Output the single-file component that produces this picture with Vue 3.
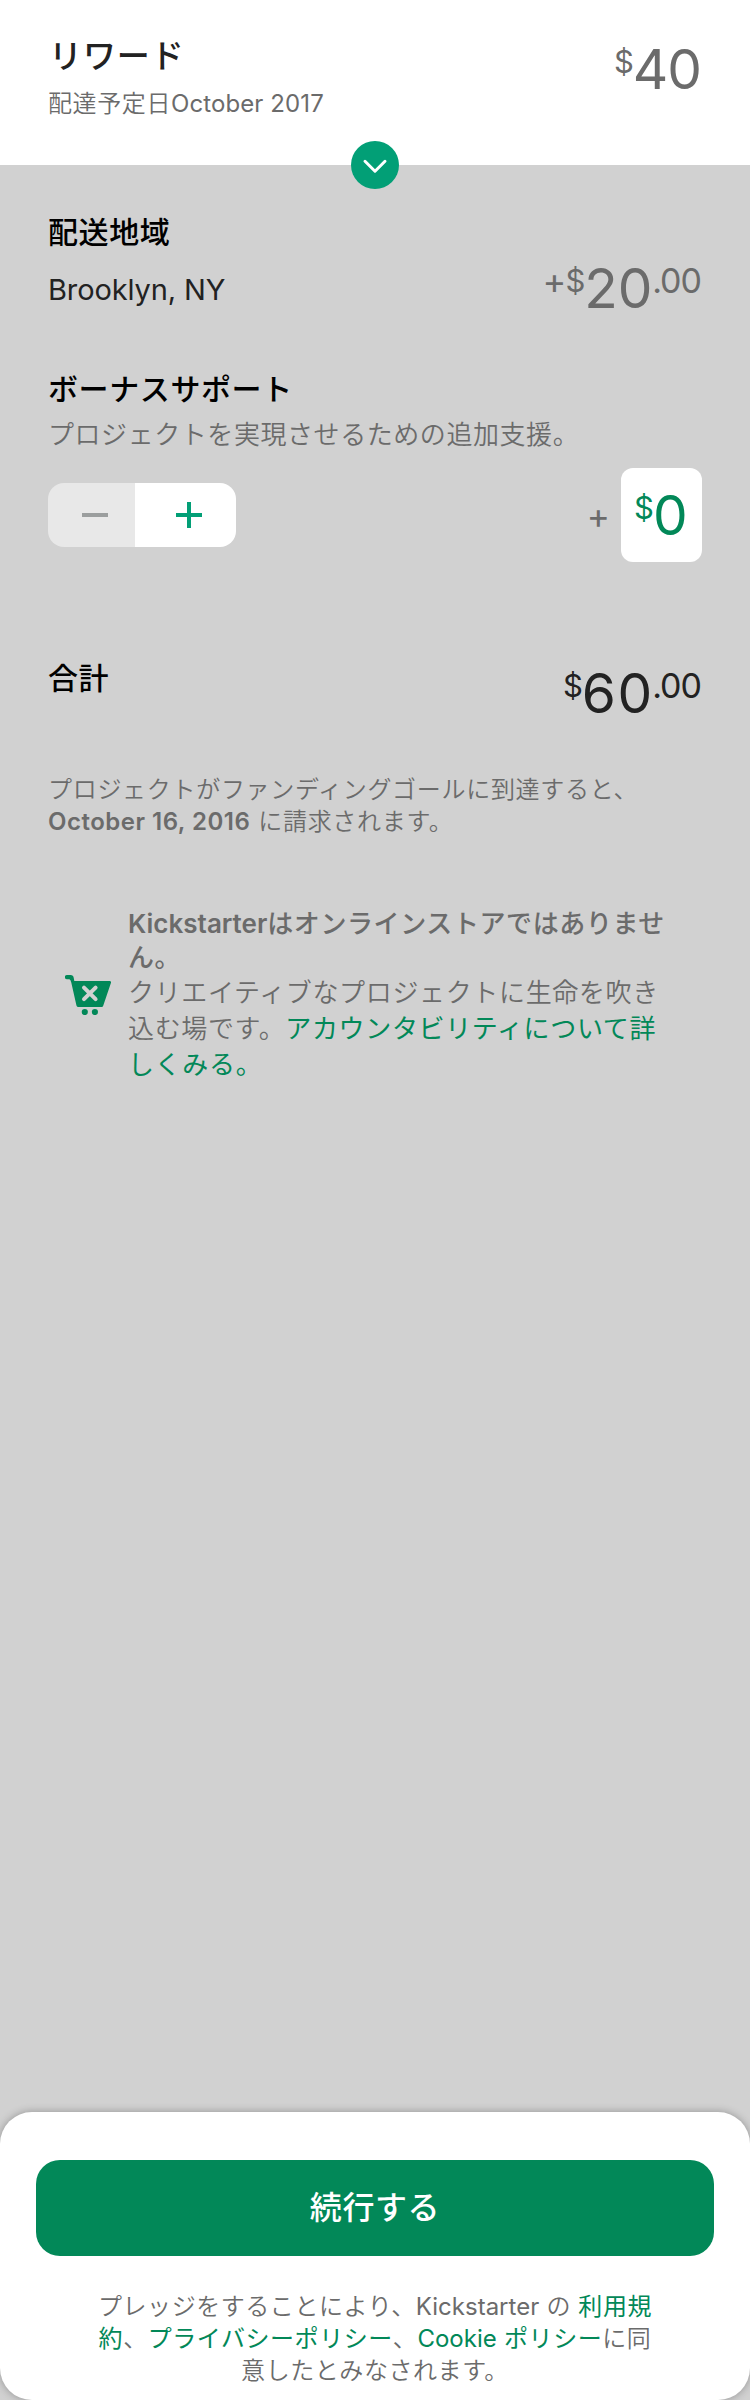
<script setup>
const notice = {
  strong: ['Kickstarter', 'はオンラインストアではありませ', 'ん。'],
  body: ['クリエイティブなプロジェクトに生命を吹き', '込む場です。'],
  link: ['アカウンタビリティについて詳', 'しくみる。'],
}
</script>

<template>
  <div class="screen">
    <header class="reward">
      <div class="reward-info">
        <h1>リワード</h1>
        <p>配達予定日<span class="date">October 2017</span></p>
      </div>
      <div class="price muted reward-price"><span class="small">$</span><span class="big">40</span></div>
      <button class="expand" aria-label="expand">
        <svg width="48" height="48" viewBox="0 0 48 48"><path d="M14 20.3 24 30.2 34 20.3" /></svg>
      </button>
    </header>

    <main>
      <section class="shipping">
        <h2>配送地域</h2>
        <div class="row">
          <span class="place">Brooklyn, NY</span>
          <div class="price muted"><span class="small sign">+</span><span class="small">$</span><span class="big">20</span><span class="small cents">.00</span></div>
        </div>
      </section>

      <section class="bonus">
        <h2>ボーナスサポート</h2>
        <p>プロジェクトを実現させるための追加支援。</p>
        <div class="row controls">
          <div class="stepper">
            <button class="minus" aria-label="minus"><svg width="26" height="26" viewBox="0 0 26 26"><path d="M0 13H26" /></svg></button>
            <button class="plus" aria-label="plus"><svg width="26" height="26" viewBox="0 0 26 26"><path d="M0 13H26M13 0V26" /></svg></button>
          </div>
          <div class="amount">
            <span class="add">+</span>
            <div class="box price"><span class="small">$</span><span class="big">0</span></div>
          </div>
        </div>
      </section>

      <section class="total row">
        <h2>合計</h2>
        <div class="price dark"><span class="small">$</span><span class="big">60</span><span class="small cents">.00</span></div>
      </section>

      <p class="charge">プロジェクトがファンディングゴールに到達すると、<br><b>October 16, 2016</b><span class="after">に請求されます。</span></p>

      <section class="notice">
        <svg class="cart" width="46" height="40" viewBox="0 0 46 40">
          <path class="fill" d="M2 0H5.5C7.5 0 8.4 1 8.7 2.8L9.3 6H44.5C45.7 6 46.3 6.9 45.9 8L38.3 30.4C38 31.4 37.3 32 36.3 32H13.6C12.4 32 11.6 31.3 11.4 30.2L6.5 8.5C6.1 6.3 5.3 4.2 4 4.2H2A2.1 2.1 0 0 1 2 0Z" />
          <circle class="fill" cx="19.8" cy="37" r="3.1" />
          <circle class="fill" cx="29.9" cy="37" r="3.1" />
          <path class="cross" d="M19 12.6 30.6 24.2M30.6 12.6 19 24.2" />
        </svg>
        <div class="notice-text">
          <strong><span class="brand">{{ notice.strong[0] }}</span>{{ notice.strong[1] }}<br>{{ notice.strong[2] }}</strong>
          <p>{{ notice.body[0] }}<br>{{ notice.body[1] }}<a>{{ notice.link[0] }}<br>{{ notice.link[1] }}</a></p>
        </div>
      </section>
    </main>

    <footer>
      <div class="sheet">
        <button class="continue">続行する</button>
        <p>
          <span class="line">プレッジをすることにより、<span class="latin">Kickstarter</span> の <a>利用規</a></span>
          <span class="line"><a>約</a>、<a>プライバシーポリシー</a>、<a><span class="latin">Cookie</span> ポリシー</a>に同</span>
          <span class="line">意したとみなされます。</span>
        </p>
      </div>
    </footer>
  </div>
</template>

<style>
body {
  margin: 0;
  background: #d1d1d1;
}
</style>

<style scoped>
.screen {
  width: 750px;
  height: 2400px;
  display: flex;
  flex-direction: column;
  overflow: hidden;
  background: #d1d1d1;
  color: #6b6b6b;
  font-family: Inter, "Noto Sans CJK JP", sans-serif;
  font-weight: 350;
}
h1, h2, p { margin: 0; }
button { border: 0; padding: 0; font-family: inherit; }
a { color: #028858; }
svg { display: block; }

.reward {
  position: relative;
  box-sizing: border-box;
  height: 165px;
  padding: 36px 48px 0;
  display: flex;
  justify-content: space-between;
  background: #fff;
}
h1 {
  padding-left: 1px;
  font-size: 33px;
  line-height: 40px;
  font-weight: 500;
  letter-spacing: 0.9px;
  color: #222;
}
.reward-info p {
  margin-top: 12px;
  font-size: 24px;
  line-height: 32px;
  letter-spacing: 0.6px;
}
.date { font-weight: 400; letter-spacing: 0.1px; }
.expand {
  position: absolute;
  left: 351px;
  bottom: -24px;
  width: 48px;
  height: 48px;
  border-radius: 50%;
  background: #029f76;
}
.expand path {
  fill: none;
  stroke: #fff;
  stroke-width: 3;
  stroke-linecap: round;
  stroke-linejoin: round;
}

.row { display: flex; justify-content: space-between; }
.price {
  display: flex;
  align-items: flex-start;
  font-weight: 400;
}
.reward-price { padding: 5px 1px 0 0; }
.big { font-size: 55px; line-height: 56px; letter-spacing: -1px; }
.small { font-size: 31px; line-height: 42px; letter-spacing: -1px; }
.sign { font-size: 36px; }
.cents { margin-right: 1px; font-size: 34px; }
.muted { color: #6b6b6b; }
.dark { color: #222; }

h2 {
  font-size: 30px;
  line-height: 40px;
  font-weight: 500;
  letter-spacing: 0.6px;
  color: #000;
}
.shipping { padding: 47px 48px 0; }
.shipping .row { margin-top: 8px; }
.shipping .big { letter-spacing: -0.2px; }
.place {
  padding-top: 10px;
  font-size: 29px;
  line-height: 40px;
  font-weight: 400;
  letter-spacing: -0.12px;
  color: #222;
}
.bonus { padding: 53px 48px 0; }
.bonus p {
  margin-top: 6px;
  font-size: 26px;
  line-height: 40px;
  letter-spacing: 0.56px;
}
.controls { margin-top: 13px; align-items: center; }
.stepper {
  display: flex;
  width: 188px;
  height: 64px;
  border-radius: 16px;
  overflow: hidden;
}
.stepper button { display: flex; align-items: center; }
.minus { width: 87px; padding-left: 34px; background: #e8e8e8; }
.plus { width: 101px; padding-left: 41px; background: #fff; }
.stepper path { fill: none; stroke-width: 4; }
.minus path { stroke: #9b9e9e; }
.plus path { stroke: #029f76; }
.amount { display: flex; align-items: center; }
.add { margin-right: 11px; font-size: 35px; line-height: 40px; font-weight: 400; }
.box {
  box-sizing: border-box;
  width: 81px;
  height: 94px;
  padding: 19px 0 0 13px;
  border-radius: 12px;
  background: #fff;
  color: #028858;
}

.total { padding: 96px 48px 0; }
.total .price { padding-top: 7px; }
.total .big { margin-right: -1.5px; letter-spacing: 1.5px; }
.charge {
  padding: 53px 48px 0;
  font-size: 24px;
  line-height: 32px;
  letter-spacing: 0.7px;
}
.charge b { font-weight: 600; letter-spacing: 0.5px; }
.after { margin-left: 8px; }

.notice {
  display: flex;
  padding: 69px 48px 0 65px;
}
.cart { margin: 68px 17px 0 0; flex: none; }
.fill { fill: #028858; }
.cross { fill: none; stroke: #d1d1d1; stroke-width: 4; stroke-linecap: round; }
.notice-text {
  font-size: 26px;
  letter-spacing: 0.6px;
  white-space: nowrap;
}
.notice-text strong { display: block; line-height: 34px; font-weight: 500; }
.brand { font-weight: 600; letter-spacing: 0; }
.notice-text p { line-height: 36px; letter-spacing: 0.65px; }
.notice-text a { font-weight: 400; }

footer {
  margin-top: auto;
}
.sheet {
  box-sizing: border-box;
  height: 288px;
  padding: 48px 36px 0;
  border-radius: 32px;
  background: #fff;
  box-shadow: 0 0 8px rgba(0, 0, 0, 0.3);
}
.continue {
  display: block;
  width: 678px;
  height: 96px;
  border-radius: 24px;
  background: #028858;
  color: #fff;
  font-size: 32px;
  line-height: 96px;
  font-weight: 500;
  letter-spacing: 0.6px;
}
.sheet p {
  margin-top: 35px;
  font-size: 24px;
  line-height: 32px;
  letter-spacing: 0.56px;
  text-align: center;
}
.line { display: block; white-space: nowrap; }
.latin { font-weight: 400; letter-spacing: 0; }
.line a { font-weight: 400; }
</style>
